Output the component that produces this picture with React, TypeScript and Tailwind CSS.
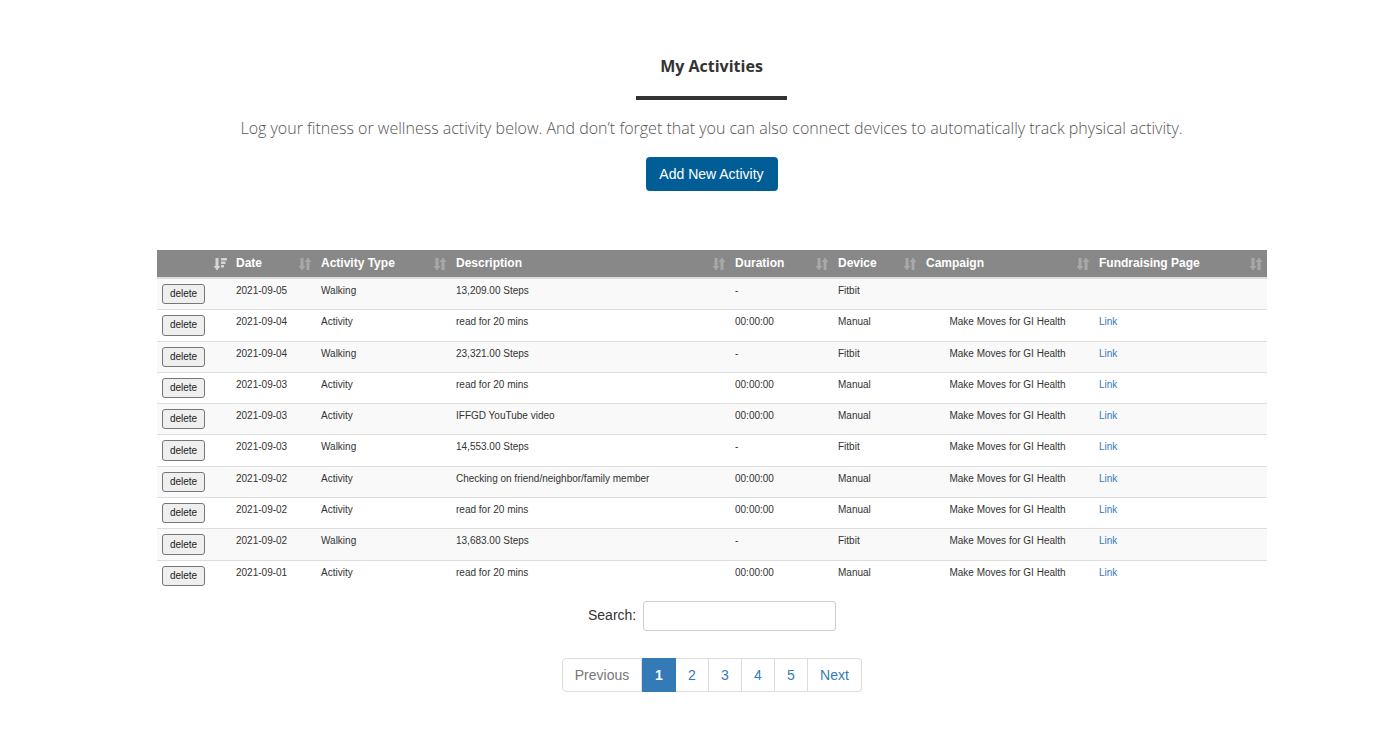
const rows = [
  ["2021-09-05", "Walking", "13,209.00 Steps", "-", "Fitbit", "", ""],
  ["2021-09-04", "Activity", "read for 20 mins", "00:00:00", "Manual", "Make Moves for GI Health", "Link"],
  ["2021-09-04", "Walking", "23,321.00 Steps", "-", "Fitbit", "Make Moves for GI Health", "Link"],
  ["2021-09-03", "Activity", "read for 20 mins", "00:00:00", "Manual", "Make Moves for GI Health", "Link"],
  ["2021-09-03", "Activity", "IFFGD YouTube video", "00:00:00", "Manual", "Make Moves for GI Health", "Link"],
  ["2021-09-03", "Walking", "14,553.00 Steps", "-", "Fitbit", "Make Moves for GI Health", "Link"],
  ["2021-09-02", "Activity", "Checking on friend/neighbor/family member", "00:00:00", "Manual", "Make Moves for GI Health", "Link"],
  ["2021-09-02", "Activity", "read for 20 mins", "00:00:00", "Manual", "Make Moves for GI Health", "Link"],
  ["2021-09-02", "Walking", "13,683.00 Steps", "-", "Fitbit", "Make Moves for GI Health", "Link"],
  ["2021-09-01", "Activity", "read for 20 mins", "00:00:00", "Manual", "Make Moves for GI Health", "Link"],
];

const columns = [
  { label: "", width: "w-[74px]" },
  { label: "Date", width: "w-[85px]" },
  { label: "Activity Type", width: "w-[135px]" },
  { label: "Description", width: "w-[279px]" },
  { label: "Duration", width: "w-[103px]" },
  { label: "Device", width: "w-[88px]" },
  { label: "Campaign", width: "w-[173px]" },
  { label: "Fundraising Page", width: "w-[173px]" },
];

function SortIcon({ active }: { active?: boolean }) {
  return (
    <svg
      width="14"
      height="14"
      viewBox="0 0 14 14"
      className={`absolute right-[4px] top-[7px] ${active ? "text-[#d4d4d4]" : "text-[#a8a8a8]"}`}
      fill="currentColor"
    >
      <path d="M2.500 1h3v8h2L4 13.500.5 9h2z" />
      {active ? (
        <>
          <rect x="8" y="1" width="6" height="2.500" />
          <rect x="8" y="4.500" width="4.500" height="2.500" />
          <rect x="8" y="8" width="3" height="2.500" />
        </>
      ) : (
        <path d="M8.500 13V5h-2L10 .5 13.500 5h-2v8z" />
      )}
    </svg>
  );
}

export default function App() {
  return (
    <div className="min-h-[730px] bg-white font-['Liberation_Sans',Arial,sans-serif] text-[#333]">
      <div className="flex flex-col items-center pt-[55px] pl-[47px]">
        <h1 className="font-['Open_Sans',sans-serif] text-[16px] leading-[22px] font-bold text-[#333]">My Activities</h1>
        <div className="mt-[19px] h-1 w-[151px] bg-[#333]" />
        <p className="mt-[17px] font-['Open_Sans',sans-serif] text-[16px] leading-[22px] font-light text-[#555]">
          Log your fitness or wellness activity below. And don’t forget that you can also connect devices to automatically track physical activity.
        </p>
        <button className="mt-[18px] h-[34px] w-[132px] rounded-[4px] bg-[#005d96] text-[14px] text-white">
          Add New Activity
        </button>
      </div>

      <table className="mt-[59px] ml-[157px] w-[1110px] table-fixed border-separate border-spacing-0 text-[10px] leading-[14px] text-[#333]">
        <thead>
          <tr className="h-[27px] bg-[#888] text-left text-[12px] font-bold text-white">
            {columns.map((col, i) => (
              <th key={i} className={`relative ${col.width} px-[5px] pb-[1px] align-middle`}>
                {col.label}
                <SortIcon active={i === 0} />
              </th>
            ))}
          </tr>
        </thead>
        <tbody>
          {rows.map((row, i) => {
            const border = i === 0 ? "border-t-2" : "border-t";
            return (
              <tr key={i} className={`${i === 0 ? "h-[32.3px]" : "h-[31.3px]"} ${i % 2 === 0 ? "bg-[#f9f9f9]" : "bg-white"}`}>
                <td className={`${border} border-[#ddd] p-[5px] align-top`}>
                  <button className="block h-[20.25px] w-[43px] rounded-[3px] border border-[#767676] bg-[#efefef] text-center text-[10px] leading-[18px] text-[#222]">
                    delete
                  </button>
                </td>
                {row.map((cell, j) => (
                  <td
                    key={j}
                    className={`${border} border-[#ddd] p-[5px] align-top ${j === 5 ? "text-center" : ""} ${j === 6 ? "text-[#337ab7]" : ""}`}
                  >
                    {cell}
                  </td>
                ))}
              </tr>
            );
          })}
        </tbody>
      </table>

      <div className="mt-[10px] ml-[588px] flex items-center gap-[7px]">
        <label className="text-[14px] text-[#333]">Search:</label>
        <input className="h-[30px] w-[193px] rounded-[3px] border border-[#ccc] bg-white" />
      </div>

      <div className="mt-[27px] ml-[562px] flex h-[34px] text-[14px] leading-[32px]">
        <span className="w-[80px] rounded-l-[4px] border border-[#ddd] text-center text-[#777]">Previous</span>
        <span className="w-[34px] bg-[#337ab7] text-center leading-[34px] font-bold text-white">1</span>
        <span className="w-[33px] border-y border-r border-[#ddd] text-center text-[#337ab7]">2</span>
        <span className="w-[33px] border-y border-r border-[#ddd] text-center text-[#337ab7]">3</span>
        <span className="w-[33px] border-y border-r border-[#ddd] text-center text-[#337ab7]">4</span>
        <span className="w-[33px] border-y border-r border-[#ddd] text-center text-[#337ab7]">5</span>
        <span className="w-[54px] rounded-r-[4px] border-y border-r border-[#ddd] text-center text-[#337ab7]">Next</span>
      </div>
    </div>
  );
}
